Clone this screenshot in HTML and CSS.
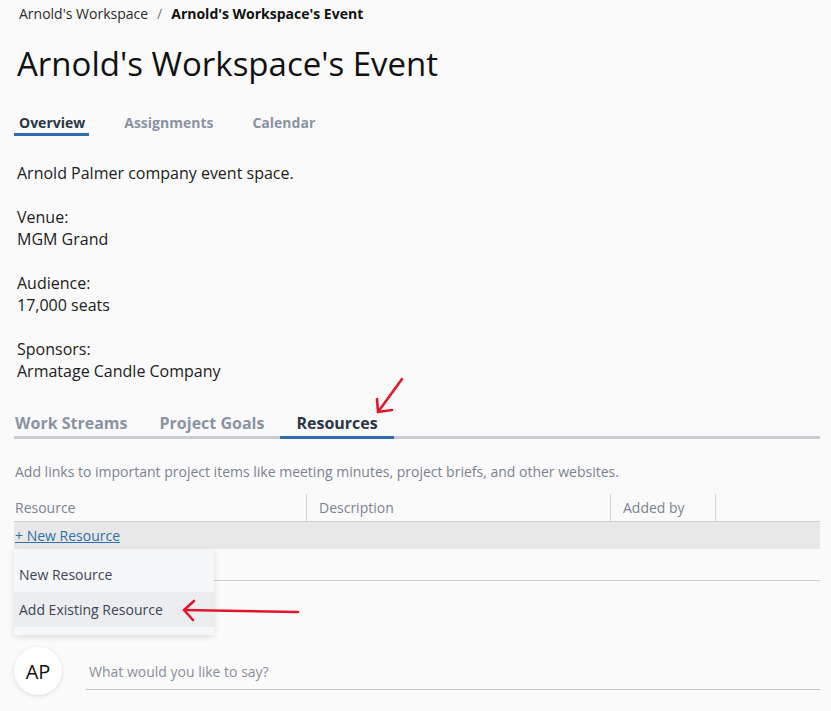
FILE: index.html
```html
<!DOCTYPE html>
<html lang="en">
<head>
<meta charset="utf-8">
<title>Arnold's Workspace's Event</title>
<link rel="stylesheet" href="styles.css">
</head>
<body>
<div class="page">
  <nav class="breadcrumb">
    <a class="crumb" href="#">Arnold's Workspace</a>
    <span class="sep">/</span>
    <span class="crumb current">Arnold's Workspace's Event</span>
  </nav>

  <h1 class="title">Arnold's Workspace's Event</h1>

  <div class="tabs">
    <span class="tab active">Overview</span>
    <span class="tab">Assignments</span>
    <span class="tab">Calendar</span>
  </div>

  <div class="details">
    <p>Arnold Palmer company event space.</p>
    <p>Venue:<br>MGM Grand</p>
    <p>Audience:<br>17,000 seats</p>
    <p>Sponsors:<br>Armatage Candle Company</p>
  </div>

  <div class="subtabs">
    <span class="subtab">Work Streams</span>
    <span class="subtab">Project Goals</span>
    <span class="subtab active">Resources</span>
  </div>

  <p class="hint">Add links to important project items like meeting minutes, project briefs, and other websites.</p>

  <div class="table">
    <div class="thead">
      <div class="th c1">Resource</div>
      <div class="th c2">Description</div>
      <div class="th c3">Added by</div>
      <div class="th c4"></div>
    </div>
    <div class="newrow"><a class="newlink" href="#">+ New Resource</a></div>
    <div class="emptyrow">
      <div class="menu">
        <div class="menu-item">New Resource</div>
        <div class="menu-item hover">Add Existing Resource</div>
      </div>
    </div>
  </div>

  <div class="comment">
    <div class="avatar">AP</div>
    <div class="comment-input">What would you like to say?</div>
  </div>
</div>

<svg class="annot" width="831" height="711" viewBox="0 0 831 711">
  <g fill="none" stroke="#e0182d" stroke-width="2.6" stroke-linecap="round" stroke-linejoin="round">
    <path d="M402 379 L378 412"/>
    <path d="M377 399 L378 412 L392 410"/>
    <path d="M298 612 L184 610"/>
    <path d="M194 601 L184 610 L193 620"/>
  </g>
</svg>
</body>
</html>
```

FILE: styles.css
```css
* { box-sizing: border-box; }
html, body { margin: 0; padding: 0; }
body {
  background: #fafafa;
  font-family: "Open Sans", "Noto Sans", sans-serif;
  color: #1c1c1c;
  width: 831px;
  height: 711px;
  overflow: hidden;
  position: relative;
}
.page {
  padding: 4px 11px 0 14px;
}
.breadcrumb {
  display: flex;
  align-items: center;
  gap: 9px;
  padding-left: 5px;
  font-size: 14px;
  line-height: 20px;
}
.crumb { color: #2a2a2a; text-decoration: none; }
.crumb.current { font-weight: 700; color: #111; }
.sep { color: #777; }

.title {
  margin: 18px 0 0 3px;
  font-size: 33px;
  font-weight: 400;
  line-height: 44px;
  color: #111;
  letter-spacing: 0;
}

.tabs {
  display: flex;
  gap: 30px;
  margin-top: 27px;
}
.tab {
  font-size: 14px;
  font-weight: 700;
  color: #8a93a3;
  line-height: 20px;
  padding: 0 4px 0 5px;
  border-bottom: 3px solid transparent;
}
.tab.active {
  color: #2b3645;
  border-bottom-color: #2f6ea8;
}

.details {
  margin-top: 26px;
  padding-left: 3px;
  font-size: 16px;
  line-height: 22px;
  color: #1c1c1c;
}
.details p { margin: 0 0 22px 0; }
.details p:last-child { margin-bottom: 0; }

.subtabs {
  display: flex;
  margin-top: 30px;
  border-bottom: 3px solid #c9ccd1;
}
.subtab {
  font-size: 16px;
  font-weight: 700;
  color: #8a93a3;
  line-height: 22px;
  padding: 0 16px 2px 16px;
  margin-bottom: -3px;
  border-bottom: 3px solid transparent;
}
.subtab:first-child { padding-left: 1px; }
.subtab.active {
  color: #2b3645;
  border-bottom-color: #2f6ea8;
}

.hint {
  margin: 23px 0 0 1px;
  font-size: 14px;
  line-height: 20px;
  color: #7c8390;
}

.table { margin-top: 12px; }
.thead {
  display: grid;
  grid-template-columns: 292px 304px 105px 1fr;
  border-bottom: 1px solid #cfcfcf;
}
.th {
  font-size: 14px;
  line-height: 27px;
  color: #7c8390;
  padding-left: 12px;
  border-left: 1px solid #d4d4d4;
}
.th.c1 { padding-left: 1px; border-left: none; }
.newrow {
  background: #e8e8e8;
  height: 27px;
  display: flex;
  align-items: center;
  padding-left: 1px;
}
.newlink {
  font-size: 14px;
  color: #2f6ea8;
  text-decoration: underline;
}
.emptyrow {
  position: relative;
  height: 32px;
  border-bottom: 1px solid #cfcfcf;
}
.menu {
  position: absolute;
  left: 0;
  top: 0;
  width: 200px;
  padding: 8px 0;
  background: #f6f7f9;
  box-shadow: 0 2px 6px rgba(0,0,0,0.12);
  z-index: 2;
}
.menu-item {
  font-size: 14px;
  line-height: 35px;
  color: #3d4555;
  padding-left: 5px;
}
.menu-item.hover { background: #ebedf1; }

.comment {
  display: flex;
  align-items: flex-start;
  gap: 24px;
  margin-top: 66px;
}
.avatar {
  width: 48px;
  height: 48px;
  border-radius: 50%;
  background: #ffffff;
  box-shadow: 0 1px 4px rgba(0,0,0,0.12);
  display: flex;
  align-items: center;
  justify-content: center;
  font-size: 20px;
  color: #111;
}
.comment-input {
  flex: 1;
  margin-top: 14px;
  padding: 0 0 6px 3px;
  font-size: 14px;
  line-height: 22px;
  color: #8a8f98;
  border-bottom: 1px solid #c4c4c4;
}

.annot {
  position: absolute;
  left: 0;
  top: 0;
  pointer-events: none;
  z-index: 5;
}
```
